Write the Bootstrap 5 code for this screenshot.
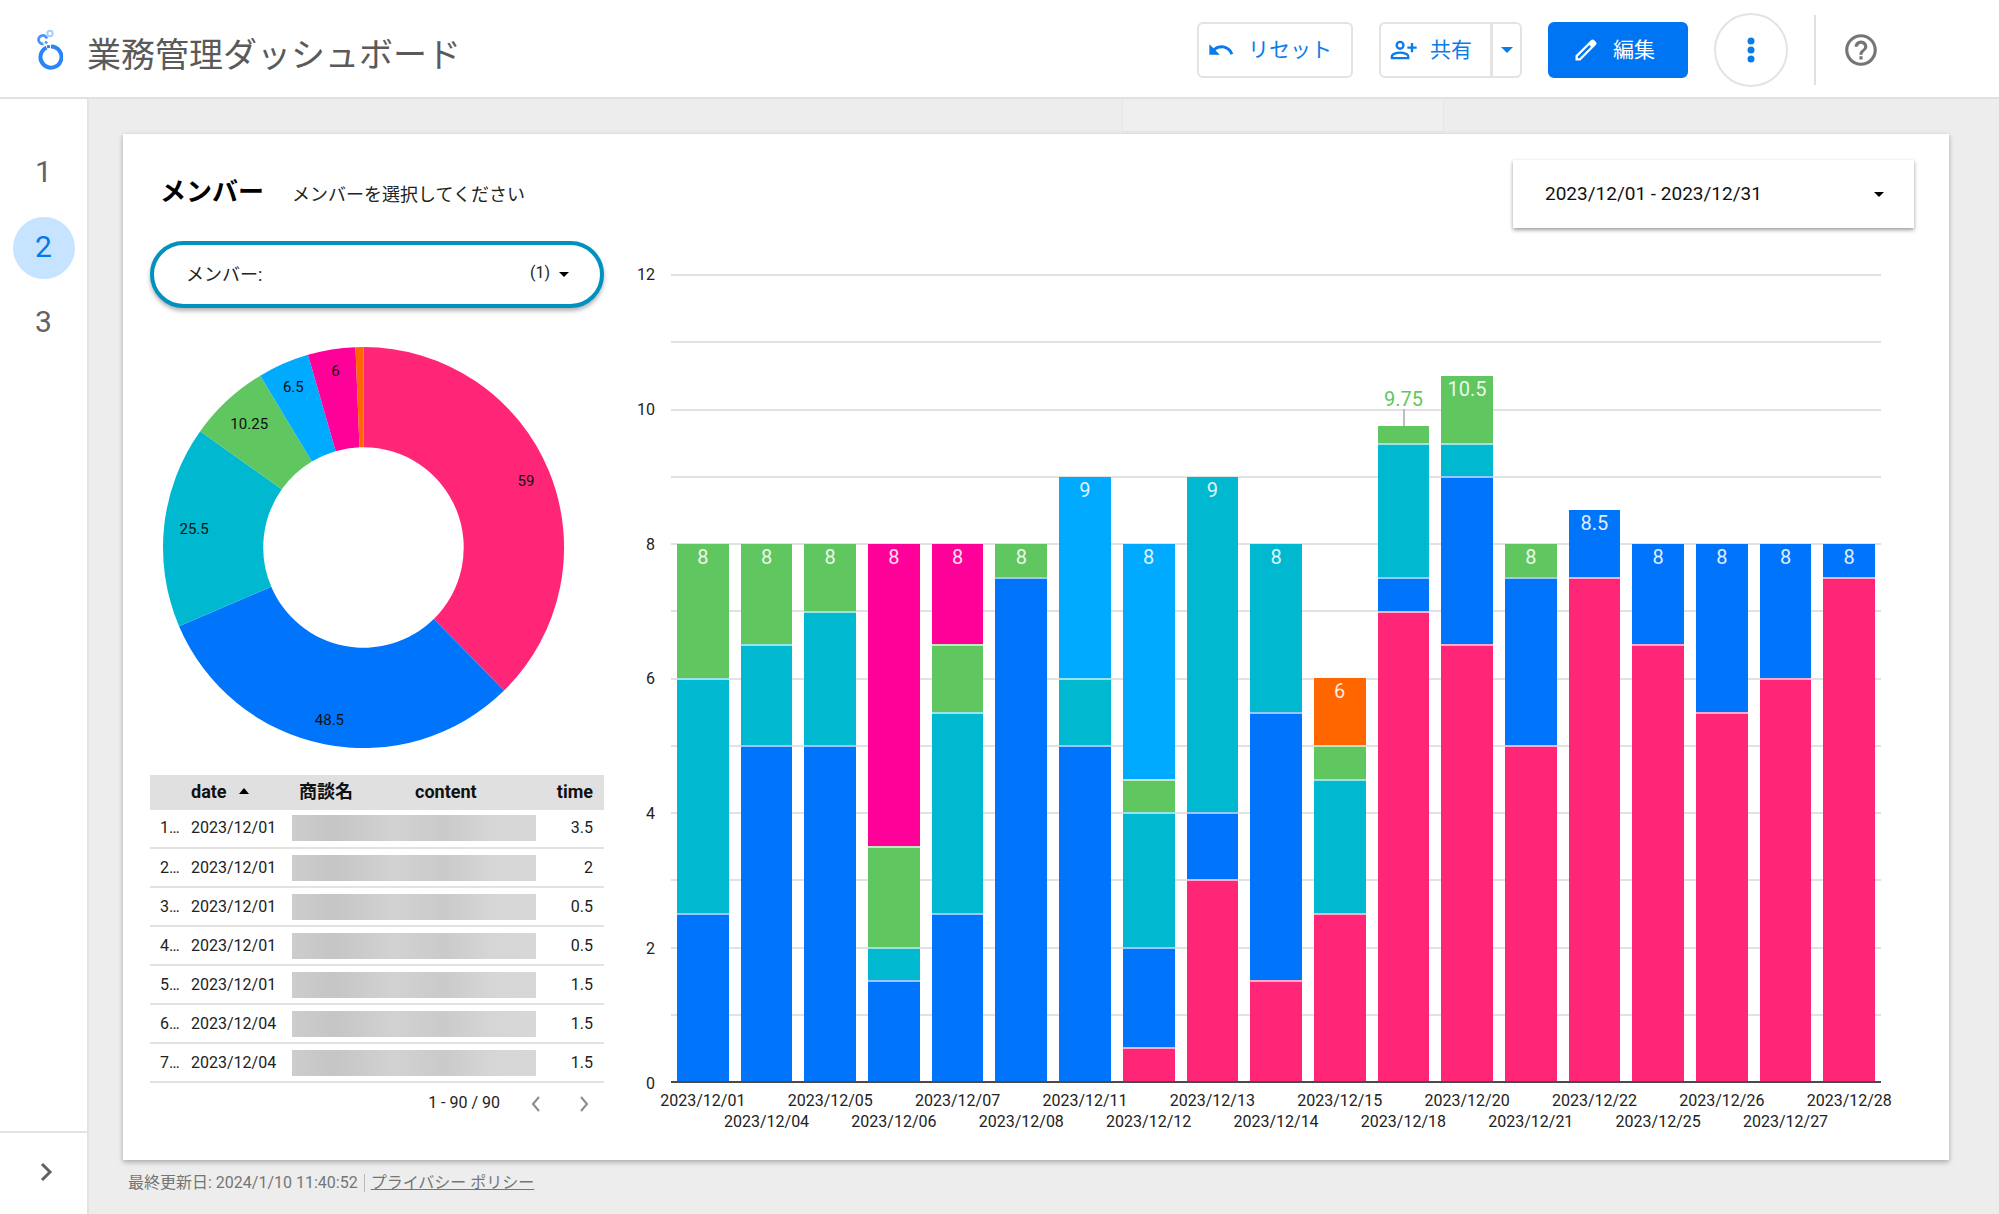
<!DOCTYPE html>
<html lang="ja">
<head>
<meta charset="utf-8">
<meta name="viewport" content="width=device-width, initial-scale=1">
<title>業務管理ダッシュボード</title>
<link href="https://cdn.jsdelivr.net/npm/bootstrap@5.3.0/dist/css/bootstrap.min.css" rel="stylesheet">
<style>
:root{--pink:#ff2678;--blue:#0074fb;--teal:#00b9d1;--green:#60c65f;--sky:#00aaff;--magenta:#ff0099;--orange:#ff6600;--link:#0b7bea;}
body{font-family:Roboto,"Noto Sans CJK JP",sans-serif;background:#ededed;color:#222;min-height:100vh;font-size:16px;line-height:24px}
.top-bar{height:99px;box-shadow:inset 0 -2px 0 #e1e1e1;padding:0 119px 0 37px}
.top-title{font-size:34px;line-height:44px;color:#5a5a5a;font-weight:400;padding-top:10px}
.tools{gap:26px}
.tool-btn{height:56px;border:2px solid #e3e3e3;border-radius:6px;background:#fff;color:var(--link);font-size:21px;line-height:28px;padding:0 0 0 8px;gap:13px}
.tool-btn:hover{background:#f3f8fe;color:var(--link)}
.btn-reset{width:156px}
.btn-share{width:113px}
.btn-share-menu{width:31px;padding:0}
.btn-edit{width:140px;background:#0075f4;border-color:#0075f4;color:#fff;padding-left:22px}
.btn-more{width:74px;height:74px;border-radius:50%;padding:0}
.bar-rule{width:2px;height:70px;background:#e0e0e0}
.page-nav{width:89px;border-right:2px solid #e3e3e3}
.page-links{gap:13px;padding-top:43px}
.page-nav a{width:62px;height:62px;border-radius:50%;font-size:30px;line-height:36px;color:#5f6368;text-decoration:none;padding-bottom:2px}
.page-nav a.active{background:#c6e4ff;color:#0478ec}
.nav-open{height:83px;border:0;border-top:2px solid #e3e3e3;border-radius:0;padding:0 0 4px 4px}
.stage{padding:0 50px 0 34px}
.tab-strip{height:35px;padding-bottom:2px}
.tab-gap{flex:1000 1 0}
.tab-shade{flex:320 1 0;background:#efefef;border:1px solid #e6e6e6;border-top:0}
.tab-rest{flex:506 1 0}
.report{background:#fff;box-shadow:0 2px 5px rgba(0,0,0,.3);padding:26px 35px 26px 27px}
.side-panel{width:454px}
.head-row{height:81px;padding:16px 0 0 10px}
.group-title{font-size:26px;line-height:32px;color:#000}
.group-hint{font-size:18px;line-height:28px;color:#222;padding:5px 0 0 28px}
.filter-pill{height:67px;border:4px solid #0091bf;border-radius:34px;box-shadow:0 3px 4px rgba(0,0,0,.3);background:#fff;padding:0 30px 0 32px;font-size:18px;color:#222}
.filter-count{font-size:16px;padding-bottom:4px}
.date-box{width:401px;height:68px;border:0;background:#fff;box-shadow:0 2px 4px rgba(0,0,0,.4);padding:0 30px 0 32px;font-size:19px;color:#111}
.donut-wrap{padding:38px 0 26px 12px}
.donut{width:403px;height:403px}
.donut text{font-size:15px;text-anchor:middle;dominant-baseline:central;fill:#111}
.records{table-layout:fixed;font-size:16px;line-height:24px;color:#222;margin:0}
.records th{font-size:18px;line-height:24px;height:34px;padding:0;background:#e0e0e0;color:#111;font-weight:700;vertical-align:middle}
.records td{height:39px;padding:0;border-bottom:2px solid #e2e2e2;vertical-align:middle;line-height:24px}
.records .c-no{width:41px;padding-left:10px}
.records .c-date{width:101px}
.records .c-name{width:123px;padding-left:7px}
.records .c-end{width:66px;padding-right:11px;text-align:right}
.masked{width:244px;height:26px;background:linear-gradient(90deg,#cdcdcd,#c5c5c5 17%,#d2d2d2 42%,#cacaca 62%,#d6d6d6 82%,#d7d7d7)}
.pager{padding:6px 8px 0 0}
.pager button{width:24px;height:28px;border:0;background:none;padding:0}
.chart-pane{margin-left:32px}
.plot-row{margin-top:46px;margin-right:33px}
.y-axis{width:19px;font-size:16px;margin-right:16px}
.y-axis span{height:0;line-height:2px;display:block;text-align:right}
.plot{display:grid}
.plot>div{grid-area:1/1}
.grid-lines div{flex:1 1 0;border-top:2px solid #e2e2e2}
.base-line{border-bottom:2px solid #4a4a4a}
.bars{padding-top:1px;padding-bottom:2px}
.slot{flex:1 1 0;padding:0 6px}
.stack{position:relative}
.seg{width:100%;border-top:2px solid rgba(255,255,255,.6)}
.seg.first{border-top:0}
.total{position:absolute;left:0;right:0;top:1px;text-align:center;color:#fff;opacity:.88;font-size:20px;line-height:24px}
.total.outside{top:-39px;color:var(--green);opacity:1}
.lead-line{position:absolute;left:50%;top:-17px;height:17px;width:2px;background:#bdbdbd}
.x-axis{height:51px;padding-top:7px;line-height:22px;margin-right:33px;margin-left:35px}
.x-axis div{flex:1 1 0;width:0;display:flex;justify-content:center;white-space:nowrap}
.x-axis div:nth-child(even){padding-top:21px}
.foot{height:54px;padding:0 5px 8px;color:#757575;font-size:16px}
.foot a{color:#757575}
.foot-rule{width:1px;height:18px;background:#bbb;margin:0 6px}
.s-pink{background-color:var(--pink)}.s-blue{background-color:var(--blue)}.s-teal{background-color:var(--teal)}.s-green{background-color:var(--green)}.s-sky{background-color:var(--sky)}.s-magenta{background-color:var(--magenta)}.s-orange{background-color:var(--orange)}
</style>
<script src="https://cdn.jsdelivr.net/npm/bootstrap@5.3.0/dist/js/bootstrap.bundle.min.js"></script>
</head>
<body class="d-flex flex-column">
<header class="top-bar bg-white d-flex align-items-center justify-content-between">
  <div class="d-flex align-items-center">
    <svg width="26" height="42" viewBox="0 0 26 42" fill="none" aria-hidden="true">
      <path d="M9.500 18.600A10.500 10.500 0 1 0 14 17.600" stroke="#2a84f8" stroke-width="4"/>
      <path d="M13 17.500L10 17.800" stroke="#2a84f8" stroke-width="3"/>
      <path d="M6.500 14.800A4.200 4.200 0 1 1 9.800 9.500M9.800 12.500L8.500 14.500" stroke="#4a94f8" stroke-width="2.800"/>
      <circle cx="13" cy="4.500" r="2.700" stroke="#a9cdfc" stroke-width="2"/>
    </svg>
    <h1 class="top-title mb-0 ms-4">業務管理ダッシュボード</h1>
  </div>
  <div class="tools d-flex align-items-center">
    <button type="button" class="btn tool-btn btn-reset d-flex align-items-center">
      <svg width="28" height="28" viewBox="0 0 24 24" fill="currentColor" aria-hidden="true"><path d="M12.500 8c-2.650 0-5.050.99-6.900 2.600L2 7v9h9l-3.620-3.620c1.390-1.160 3.160-1.880 5.120-1.880 3.540 0 6.550 2.310 7.600 5.500l2.370-.78C21.080 11.030 17.150 8 12.500 8z"/></svg>
      リセット</button>
    <div class="btn-group" role="group" aria-label="共有">
      <button type="button" class="btn tool-btn btn-share d-flex align-items-center">
        <svg width="28" height="28" viewBox="0 0 24 24" fill="none" stroke="currentColor" stroke-width="2" aria-hidden="true"><circle cx="9.500" cy="8" r="2.900"/><path d="M2.500 19v-1.500c0-2 4-3.300 7-3.300s7 1.300 7 3.300V19zM19.700 6v8M15.700 10h8"/></svg>
        共有</button>
      <button type="button" class="btn tool-btn btn-share-menu" aria-label="共有メニュー"><svg width="12" height="6" viewBox="0 0 12 6" fill="currentColor" class="d-block mx-auto"><path d="M0 0h12L6 6z"/></svg></button>
    </div>
    <button type="button" class="btn tool-btn btn-edit d-flex align-items-center">
      <svg width="28" height="28" viewBox="0 0 24 24" fill="currentColor" aria-hidden="true"><path d="M20.410 4.940l-1.350-1.350c-.78-.78-2.050-.78-2.830 0L3 16.820V21h4.180L20.410 7.770c.79-.78.79-2.050 0-2.830zM6.410 19.060L5 19v-1.360l9.820-9.820 1.410 1.410z"/></svg>
      編集</button>
    <button type="button" class="btn tool-btn btn-more" aria-label="その他"><svg width="8" height="26" viewBox="0 0 8 26" fill="currentColor" class="d-block mx-auto"><circle cx="4" cy="4" r="3.500"/><circle cx="4" cy="13" r="3.500"/><circle cx="4" cy="22" r="3.500"/></svg></button>
    <div class="bar-rule"></div>
    <button type="button" class="btn p-0 border-0" aria-label="ヘルプ"><svg class="d-block" width="38" height="38" viewBox="0 0 24 24" fill="#757575"><path d="M11 18h2v-2h-2v2zm1-16C6.480 2 2 6.480 2 12s4.480 10 10 10 10-4.480 10-10S17.520 2 12 2zm0 18c-4.410 0-8-3.590-8-8s3.590-8 8-8 8 3.590 8 8-3.590 8-8 8zm0-14c-2.210 0-4 1.790-4 4h2c0-1.100.9-2 2-2s2 .9 2 2c0 2-3 1.750-3 5h2c0-2.250 3-2.500 3-5 0-2.210-1.790-4-4-4z"/></svg></button>
  </div>
</header>
<div class="d-flex flex-grow-1">
  <nav class="page-nav bg-white d-flex flex-column flex-shrink-0" aria-label="ページ">
    <div class="page-links d-flex flex-column align-items-center flex-grow-1">
      <a href="#p1" class="d-flex align-items-center justify-content-center">1</a>
      <a href="#p2" class="active d-flex align-items-center justify-content-center" aria-current="page">2</a>
      <a href="#p3" class="d-flex align-items-center justify-content-center">3</a>
    </div>
    <button type="button" class="btn nav-open" aria-label="ナビゲーションを開く"><svg width="14" height="20" viewBox="0 0 14 20" fill="none" stroke="#5f6368" stroke-width="3"><path d="M3 2l8 8-8 8"/></svg></button>
  </nav>
  <div class="stage flex-grow-1 d-flex flex-column">
    <div class="tab-strip d-flex"><div class="tab-gap"></div><div class="tab-shade"></div><div class="tab-rest"></div></div>
    <main class="report flex-grow-1 d-flex">
      <section class="side-panel flex-shrink-0">
        <div class="head-row d-flex align-items-start">
          <h2 class="group-title fw-bold mb-0">メンバー</h2>
          <p class="group-hint mb-0">メンバーを選択してください</p>
        </div>
        <button type="button" class="filter-pill w-100 d-flex align-items-center justify-content-between">
          <span>メンバー:</span>
          <span class="d-flex align-items-center gap-2"><span class="filter-count">(1)</span><svg width="12" height="6" viewBox="0 0 12 6"><path d="M1 0h10L6 5z"/></svg></span>
        </button>
        <div class="donut-wrap"><svg class="donut d-block" id="donut" viewBox="-201 -201 402 402" role="img" aria-label="メンバー別の時間"></svg></div>
        <table class="table records w-100">
          <thead><tr><th class="c-no"></th><th class="c-date">date <svg class="ms-2 mb-1" width="10" height="6" viewBox="0 0 10 6"><path d="M0 6h10L5 0z"/></svg></th><th class="c-name">商談名</th><th>content</th><th class="c-end">time</th></tr></thead>
          <tbody id="rows"></tbody>
        </table>
        <div class="pager d-flex align-items-center justify-content-end gap-4">
          <span>1 - 90 / 90</span>
          <button type="button" aria-label="前へ"><svg width="12" height="18" viewBox="0 0 12 18" fill="none" stroke="#8a8a8a" stroke-width="2"><path d="M9 2L3 9l6 7"/></svg></button>
          <button type="button" aria-label="次へ"><svg width="12" height="18" viewBox="0 0 12 18" fill="none" stroke="#8a8a8a" stroke-width="2"><path d="M3 2l6 7-6 7"/></svg></button>
        </div>
      </section>
      <section class="chart-pane flex-grow-1 d-flex flex-column">
        <button type="button" class="date-box ms-auto d-flex align-items-center justify-content-between"><span>2023/12/01 - 2023/12/31</span><svg width="10" height="5" viewBox="0 0 10 5"><path d="M0 0h10L5 5z"/></svg></button>
        <div class="plot-row flex-grow-1 d-flex">
          <div class="y-axis d-flex flex-column justify-content-between"><span>12</span><span>10</span><span>8</span><span>6</span><span>4</span><span>2</span><span>0</span></div>
          <div class="plot flex-grow-1">
            <div class="grid-lines base-line d-flex flex-column" id="lines"></div>
            <div class="bars d-flex align-items-end" id="bars"></div>
          </div>
        </div>
        <div class="x-axis d-flex" id="dates"></div>
      </section>
    </main>
    <footer class="foot d-flex align-items-center"><span>最終更新日: 2024/1/10 11:40:52</span><span class="foot-rule"></span><a href="#privacy">プライバシー ポリシー</a></footer>
  </div>
</div>
<script>
// Donut: value, colour, distance of the label from the centre
const shares=[[59,'pink',175],[48.5,'blue',175],[25.5,'teal',170],[10.25,'green',168],[6.5,'sky',175],[6,'magenta',178],[1,'orange',0]];
const whole=shares.reduce((s,d)=>s+d[0],0);
let from=0,parts='';
const pt=(r,t)=>(r*Math.sin(t)).toFixed(1)+' '+(-r*Math.cos(t)).toFixed(1);
for(const [v,c,lr] of shares){
  const to=from+v/whole*2*Math.PI,mid=(from+to)/2,big=to-from>Math.PI?1:0;
  parts+=`<path fill="var(--${c})" d="M${pt(200,from)}A200 200 0 ${big} 1 ${pt(200,to)}L${pt(100,to)}A100 100 0 ${big} 0 ${pt(100,from)}z"/>`;
  if(lr)parts+=`<text x="${(lr*Math.sin(mid)).toFixed(0)}" y="${(-lr*Math.cos(mid)).toFixed(0)}">${v}</text>`;
  from=to;
}
document.getElementById('donut').innerHTML=parts;

// Table rows
const rows=[['1…','2023/12/01','3.5'],['2…','2023/12/01','2'],['3…','2023/12/01','0.5'],['4…','2023/12/01','0.5'],['5…','2023/12/01','1.5'],['6…','2023/12/04','1.5'],['7…','2023/12/04','1.5']];
document.getElementById('rows').innerHTML=rows.map(r=>`<tr><td class="c-no">${r[0]}</td><td class="c-date">${r[1]}</td><td colspan="2"><div class="masked"></div></td><td class="c-end">${r[2]}</td></tr>`).join('');

// Stacked bars, each listed from the top segment down
const days=[
 ['01',{green:2,teal:3.5,blue:2.5}],['04',{green:1.5,teal:1.5,blue:5}],['05',{green:1,teal:2,blue:5}],
 ['06',{magenta:4.5,green:1.5,teal:.5,blue:1.5}],['07',{magenta:1.5,green:1,teal:3,blue:2.5}],['08',{green:.5,blue:7.5}],
 ['11',{sky:3,teal:1,blue:5}],['12',{sky:3.5,green:.5,teal:2,blue:1.5,pink:.5}],['13',{teal:5,blue:1,pink:3}],
 ['14',{teal:2.5,blue:4,pink:1.5}],['15',{orange:1,green:.5,teal:2,pink:2.5}],['18',{green:.25,teal:2,blue:.5,pink:7}],
 ['20',{green:1,teal:.5,blue:2.5,pink:6.5}],['21',{green:.5,blue:2.5,pink:5}],['22',{blue:1,pink:7.5}],
 ['25',{blue:1.5,pink:6.5}],['26',{blue:2.5,pink:5.5}],['27',{blue:2,pink:6}],['28',{blue:.5,pink:7.5}]];
document.getElementById('lines').innerHTML='<div></div>'.repeat(12);
document.getElementById('bars').innerHTML=days.map(([d,s])=>{
  const sum=Object.values(s).reduce((a,b)=>a+b,0),out=sum===9.75;
  const segs=Object.entries(s).map(([c,v],i)=>`<div class="seg s-${c}${i?'':' first'}" style="height:${v/sum*100}%"></div>`).join('');
  return `<div class="slot h-100 d-flex align-items-end"><div class="stack w-100" style="height:${sum/12*100}%">${segs}${out?'<i class="lead-line"></i>':''}<span class="total${out?' outside':''}">${sum}</span></div></div>`;
}).join('');
document.getElementById('dates').innerHTML=days.map(d=>`<div><span>2023/12/${d[0]}</span></div>`).join('');
</script>
</body>
</html>
